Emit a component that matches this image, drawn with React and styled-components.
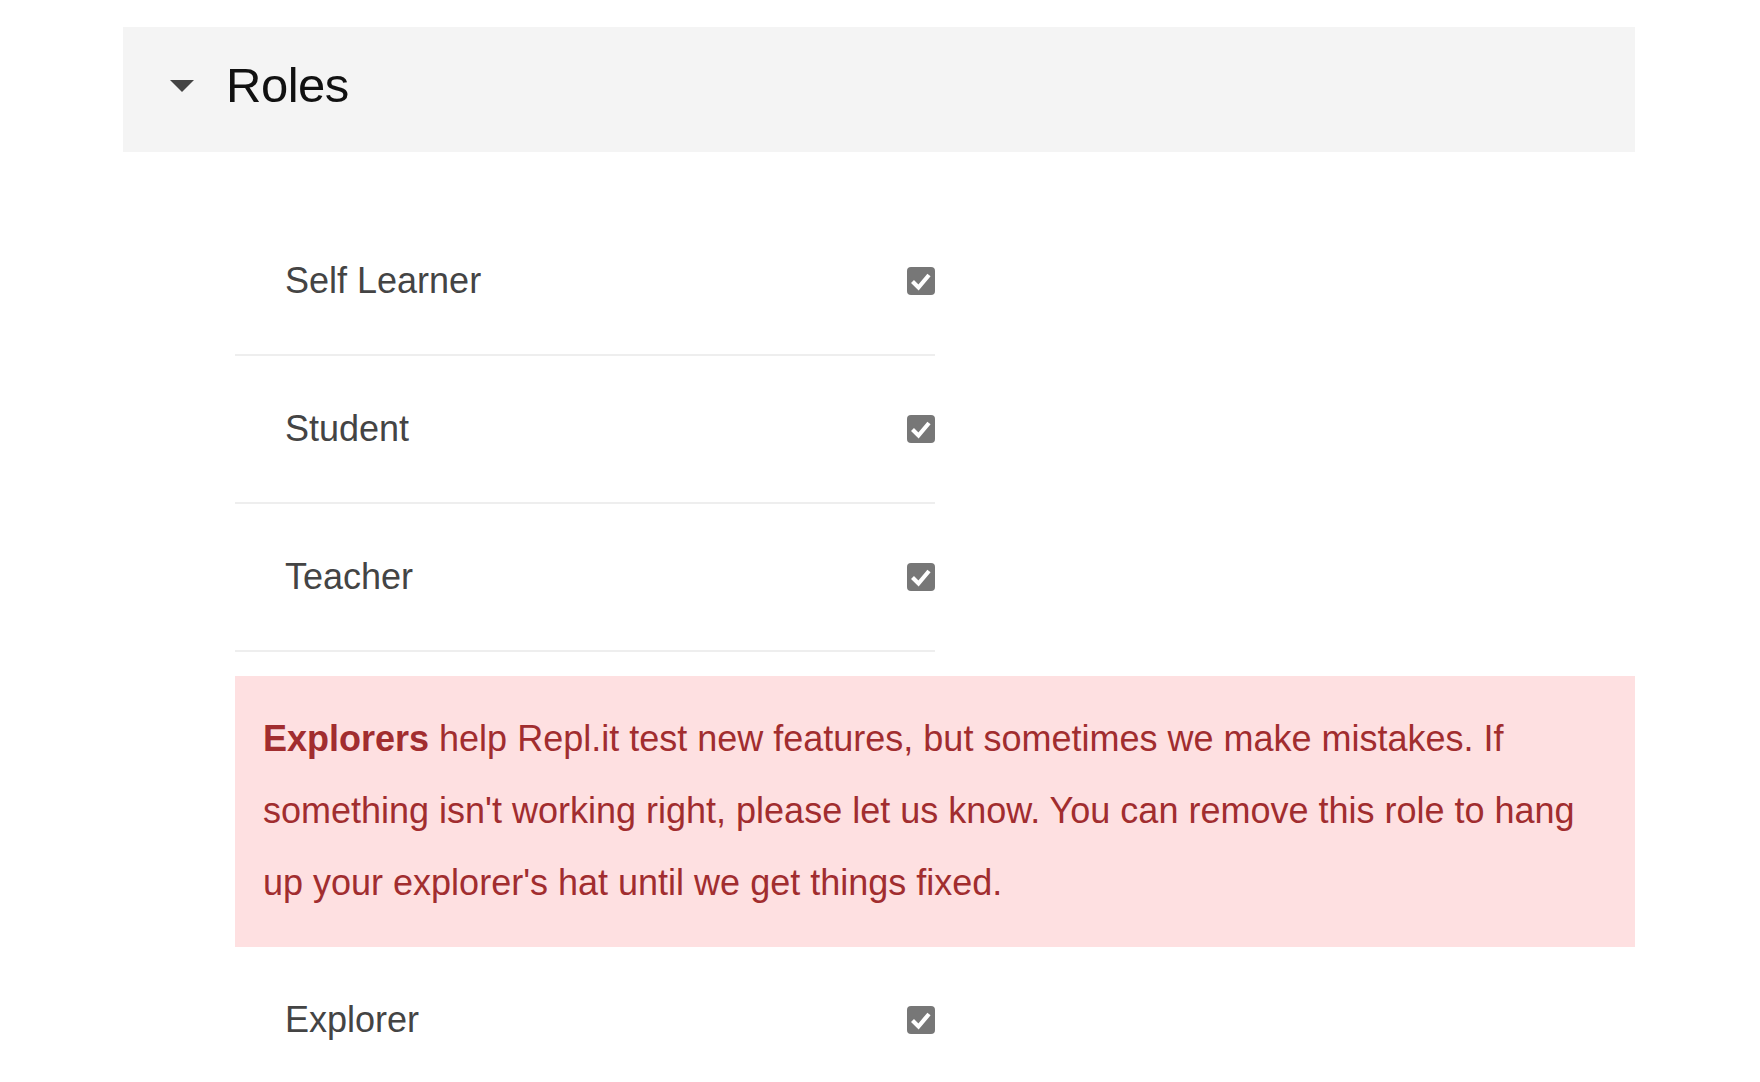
import React, { useState } from 'react'
import styled, { createGlobalStyle } from 'styled-components'

const GlobalStyle = createGlobalStyle`
  body {
    margin: 0;
    background: #fff;
    font-family: "Liberation Sans", Arial, sans-serif;
  }
`

const Page = styled.div`
  padding: 27px 125px 0 123px;
  width: 1512px;
`

const Header = styled.div`
  display: flex;
  align-items: center;
  background: #f4f4f4;
  padding: 27px 47px 36px;
  cursor: pointer;
`

const Caret = styled.span`
  width: 0;
  height: 0;
  border-left: 12px solid transparent;
  border-right: 12px solid transparent;
  border-top: 12px solid #444;
  margin-top: 2px;
  margin-right: 32px;
  transform: ${p => (p.open ? 'none' : 'rotate(-90deg)')};
`

const Title = styled.h1`
  margin: 0;
  font-size: 49px;
  letter-spacing: -0.5px;
  font-weight: 400;
  line-height: 62px;
  color: #111;
`

const Body = styled.div`
  padding: 56px 0 0 112px;
`

const Row = styled.label`
  display: flex;
  align-items: center;
  justify-content: space-between;
  width: 700px;
  height: 148px;
  padding: 0 0 0 50px;
  box-sizing: border-box;
  border-bottom: 2px solid ${p => (p.last ? 'transparent' : '#eeeeee')};
  font-size: 36px;
  color: #444;
`

const Box = styled.span`
  width: 28px;
  height: 28px;
  border-radius: 4px;
  background: ${p => (p.checked ? '#777' : '#fff')};
  border: ${p => (p.checked ? 'none' : '2px solid #777')};
  box-sizing: border-box;
  display: flex;
  align-items: center;
  justify-content: center;
`

const Notice = styled.div`
  margin-top: 24px;
  background: #fee0e1;
  color: #a12d2f;
  font-size: 36px;
  line-height: 72px;
  padding: 27px 27px 28px 28px;

  strong {
    font-weight: 700;
  }
`

function Check({ checked, onToggle }) {
  return (
    <Box checked={checked} onClick={onToggle}>
      {checked && (
        <svg width="28" height="28" viewBox="0 0 28 28">
          <path d="M5.5 14.5 L11.5 20.5 L22 8" fill="none" stroke="#fff" strokeWidth="4.2" />
        </svg>
      )}
    </Box>
  )
}

const roles = ['Self Learner', 'Student', 'Teacher']

export default function App() {
  const [open, setOpen] = useState(true)
  const [checked, setChecked] = useState({
    'Self Learner': true,
    Student: true,
    Teacher: true,
    Explorer: true,
  })
  const toggle = name => setChecked({ ...checked, [name]: !checked[name] })

  return (
    <>
      <GlobalStyle />
      <Page>
        <Header onClick={() => setOpen(!open)}>
          <Caret open={open} />
          <Title>Roles</Title>
        </Header>
        {open && (
          <Body>
            {roles.map(r => (
              <Row key={r}>
                {r}
                <Check checked={checked[r]} onToggle={() => toggle(r)} />
              </Row>
            ))}
            <Notice>
              <strong>Explorers</strong> help Repl.it test new features, but sometimes we make mistakes. If
              something isn't working right, please let us know. You can remove this role to hang up
              your explorer's hat until we get things fixed.
            </Notice>
            <Row last>
              Explorer
              <Check checked={checked.Explorer} onToggle={() => toggle('Explorer')} />
            </Row>
          </Body>
        )}
      </Page>
    </>
  )
}
